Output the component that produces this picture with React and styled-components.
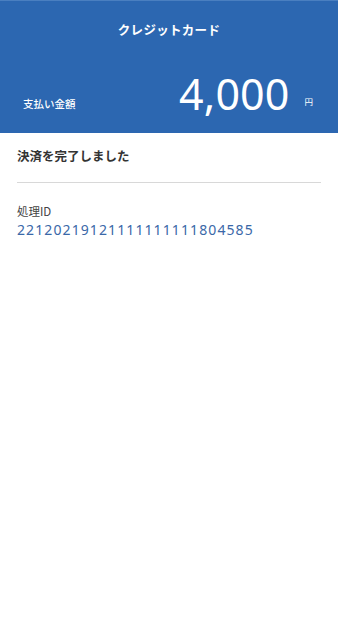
import React from "react";
import styled, { createGlobalStyle } from "styled-components";

const Global = createGlobalStyle`
  html, body { margin: 0; padding: 0; background: #fff; }
  body { font-family: "Noto Sans CJK JP", "Noto Sans", sans-serif; }
`;

const Page = styled.div`
  width: 338px;
  min-height: 640px;
  background: #fff;
  display: flex;
  flex-direction: column;
`;

const Header = styled.header`
  height: 133px;
  box-sizing: border-box;
  background: #2c67b1;
  border-top: 1px solid #4a7fc0;
  color: #fff;
  display: flex;
  flex-direction: column;
`;

const Title = styled.h1`
  margin: 0;
  padding-top: 20px;
  font-size: 12.5px;
  font-weight: 700;
  line-height: 18px;
  text-align: center;
  letter-spacing: 0.3px;
`;

const AmountRow = styled.div`
  display: flex;
  align-items: flex-end;
  padding: 0 25px 0 23px;
  margin-top: 28px;
`;

const AmountLabel = styled.span`
  font-size: 10.5px;
  line-height: 14px;
  font-weight: 500;
  margin-bottom: 10px;
`;

const Amount = styled.span`
  margin-left: auto;
  font-family: "Noto Sans", "Open Sans", sans-serif;
  font-size: 43px;
  line-height: 54px;
  font-weight: 400;
  letter-spacing: 0.1px;
`;

const Yen = styled.span`
  font-size: 8.5px;
  line-height: 12px;
  margin-left: 15px;
  margin-bottom: 14px;
`;

const Body = styled.main`
  padding: 0 17px;
  display: flex;
  flex-direction: column;
`;

const Message = styled.p`
  margin: 14px 0 0;
  font-size: 12.5px;
  line-height: 18px;
  font-weight: 700;
  color: #333;
`;

const Divider = styled.hr`
  margin: 17px 0 0;
  border: 0;
  height: 1px;
  background: #d8d8d8;
`;

const FieldLabel = styled.div`
  margin-top: 20px;
  font-size: 11.5px;
  line-height: 16px;
  color: #444;
`;

const FieldValue = styled.div`
  margin-top: 1px;
  font-family: "Noto Sans", "Open Sans", sans-serif;
  font-size: 14px;
  line-height: 19px;
  letter-spacing: 1.1px;
  color: #3a68a8;
`;

export default function App() {
  return (
    <>
      <Global />
      <Page>
        <Header>
          <Title>クレジットカード</Title>
          <AmountRow>
            <AmountLabel>支払い金額</AmountLabel>
            <Amount>4,000</Amount>
            <Yen>円</Yen>
          </AmountRow>
        </Header>
        <Body>
          <Message>決済を完了しました</Message>
          <Divider />
          <FieldLabel>処理ID</FieldLabel>
          <FieldValue>22120219121111111111804585</FieldValue>
        </Body>
      </Page>
    </>
  );
}
